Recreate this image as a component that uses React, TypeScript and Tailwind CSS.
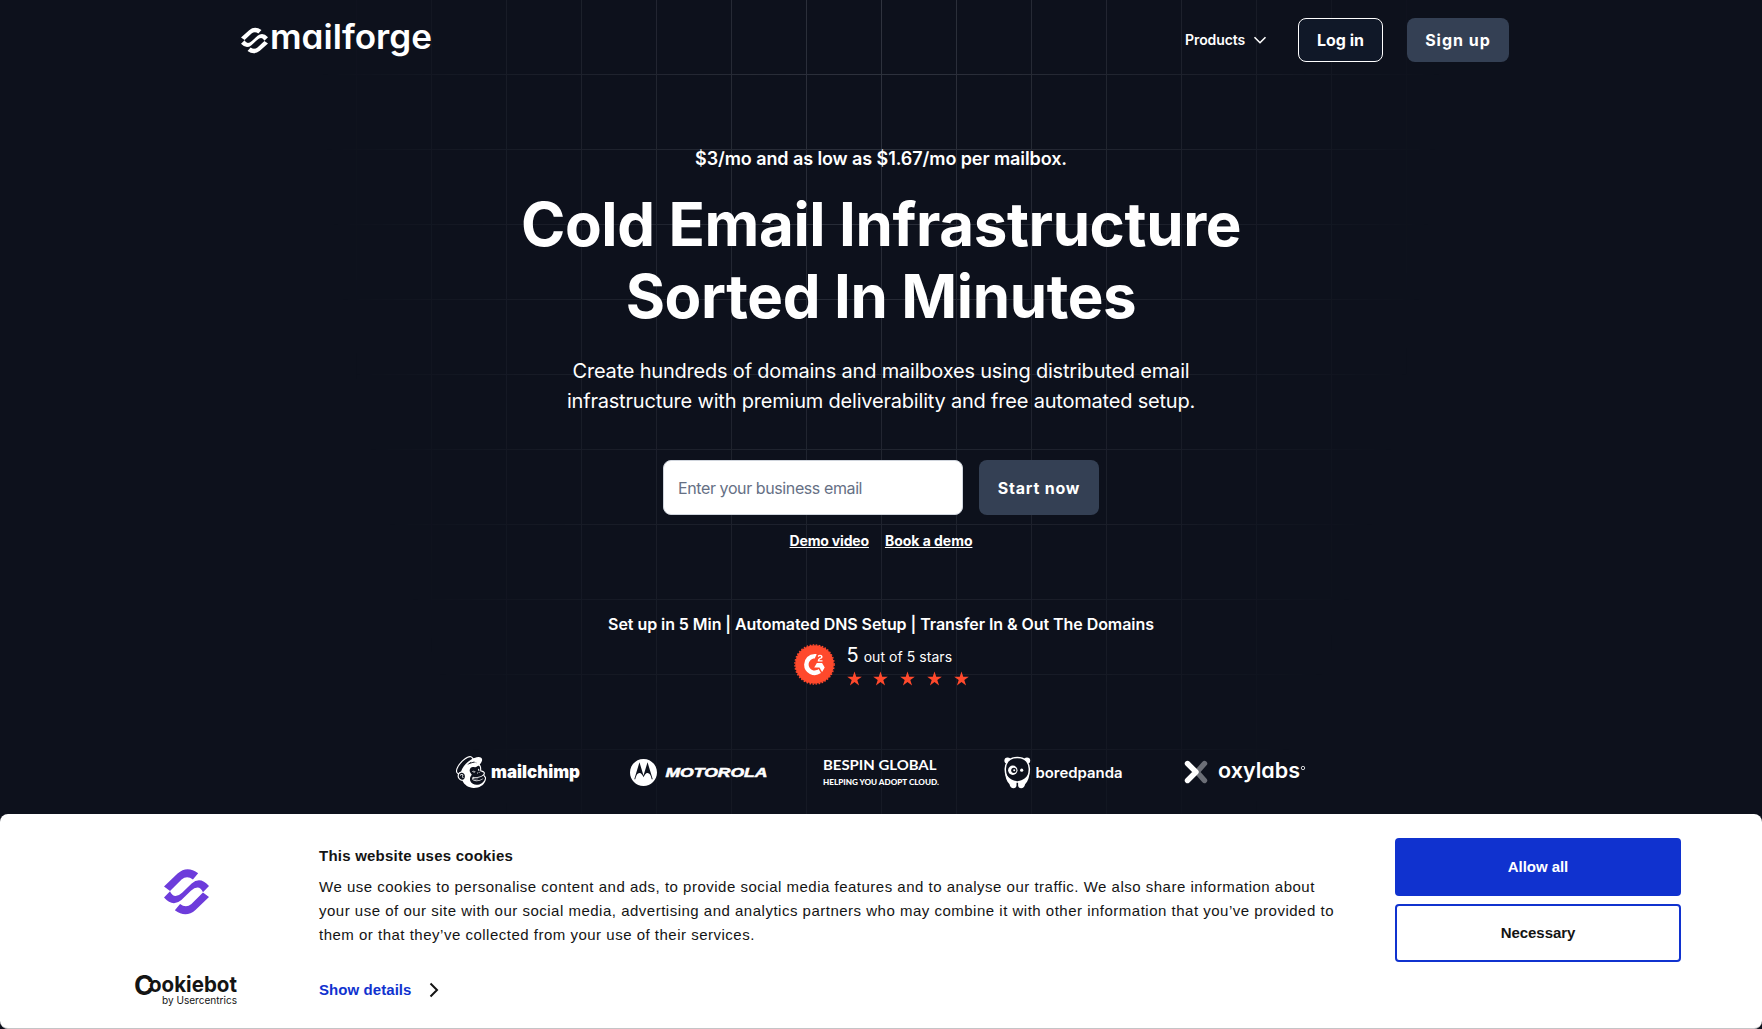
import React from "react";
import { SiG2, SiMailchimp, SiMotorola } from "react-icons/si";

function ForgeMark({ className }: { className: string }) {
  const arm = "M0 18.5 L13.5 5.5 Q23 -3 34 5.2 L28.8 11.6 Q23 7 17.5 11.5 L6 23 Z";
  return (
    <svg viewBox="0 0 44.8 47.4" preserveAspectRatio="none" fill="currentColor" className={className}>
      <path d={arm} />
      <path d="M0 29.5 L6 23.2 Q8 28 11.5 28 Q14.5 28 18 24.7 L27.5 15.5 Q36 8 44.8 18 L38.8 24.2 Q36.8 19.4 33.3 19.4 Q30.3 19.4 26.8 22.7 L17.3 31.9 Q8.8 39.4 0 29.5Z" />
      <path d={arm} transform="rotate(180 22.4 23.7)" />
    </svg>
  );
}

type WordProps = {
  x: number;
  y: number;
  size: number;
  width: number;
  children: string;
  className?: string;
  round?: boolean;
};

/** A logo word stretched to an exact width; `round` selects single-storey letters. */
function Word({ x, y, size, width, children, className, round }: WordProps) {
  return (
    <text
      x={x}
      y={y}
      fontSize={size}
      textLength={width}
      lengthAdjust="spacingAndGlyphs"
      fill="currentColor"
      className={className}
      style={round ? { fontFeatureSettings: '"cv11"' } : undefined}
    >
      {children}
    </text>
  );
}

function Header() {
  return (
    <header className="flex h-20 items-center justify-between pr-[253px] pl-[241px]">
      <div className="flex items-start">
        <ForgeMark className="mt-[7px] h-[27px] w-[27px]" />
        <svg className="h-[40px] w-[166px] overflow-visible">
          <Word x={2} y={29} size={33.5} width={162} round className="font-['Inter'] font-semibold">
            mailforge
          </Word>
        </svg>
      </div>
      <nav className="flex items-center">
        <a className="flex items-center gap-2 text-sm font-semibold tracking-[-0.11px]">
          Products
          <svg className="h-3 w-3.5" viewBox="0 0 14 12" fill="none" stroke="currentColor" strokeWidth="1.6">
            <path d="M1.5 3.2 7 8.7l5.5-5.5" />
          </svg>
        </a>
        <button className="ml-[31px] flex h-11 w-[85px] items-center justify-center rounded-lg border border-white bg-gray-900 text-base font-bold">
          Log in
        </button>
        <button className="ml-6 flex h-11 w-[102px] items-center justify-center rounded-lg bg-[#344054] text-base font-bold tracking-[1px]">
          Sign up
        </button>
      </nav>
    </header>
  );
}

function Star() {
  return (
    <svg className="h-[15px] w-[15px]" viewBox="0 0 24 24" fill="#ff492c">
      <path d="M12 .8l2.8 8.4h8.9l-7.2 5.2 2.8 8.6L12 17.7 4.7 23l2.8-8.6L.3 9.2h8.9z" />
    </svg>
  );
}

function Rating() {
  return (
    <div className="flex justify-center pl-0.5">
      <span className="relative flex h-[41px] w-[41px]">
        <svg className="h-[41px] w-[41px]" viewBox="0 0 41 41">
          <circle cx="20.5" cy="20.5" r="19.3" fill="#ff492c" />
          <circle cx="20.5" cy="20.5" r="19.6" fill="none" stroke="#ff492c" strokeWidth="1.4" strokeDasharray="1.6 1.5" />
        </svg>
        <span className="absolute top-[6px] left-[6px] h-[29px] w-[29px] rounded-full bg-white" />
        <SiG2 className="absolute top-0.5 left-0.5 h-[37px] w-[37px] text-[#ff492c]" />
      </span>
      <div className="ml-3 w-[124px]">
        <p className="-mt-[3px] flex h-[27px] items-baseline gap-[5px] leading-5">
          <span className="text-xl">5</span>
          <span className="text-sm tracking-[0.05px]">out of 5 stars</span>
        </p>
        <div className="mt-[3px] flex gap-[11.8px]">
          {[0, 1, 2, 3, 4].map((i) => (
            <Star key={i} />
          ))}
        </div>
      </div>
    </div>
  );
}

function Panda() {
  return (
    <svg className="h-[33px] w-[27px]" viewBox="0 0 27 33">
      <circle cx="3.6" cy="4.6" r="3.2" fill="#fff" />
      <circle cx="23" cy="4.6" r="3.2" fill="#fff" />
      <path
        d="M13.3 1.6C6 1.6 1.7 6 1.3 12.5 1 18 3 22.5 6.5 26h13.6c3.5-3.5 5.500-8 5.200-13.500C24.900 6 20.600 1.600 13.300 1.600z"
        fill="#0d111c"
        stroke="#fff"
        strokeWidth="1.5"
      />
      <path d="M1.300 16c2 6 7 8.500 11.200 9v4.500c0 1.500-1.300 2.800-3 2.800-2 0-3.500-1.500-4-4C2.500 25.500 1 20.500 1.300 16z" fill="#fff" />
      <path d="M25.300 16c-2 6-7 8.500-11.200 9v4.500c0 1.500 1.300 2.800 3 2.800 2 0 3.500-1.500 4-4 3-2.800 4.500-7.800 4.200-12.300z" fill="#fff" />
      <circle cx="8.8" cy="14.3" r="4.7" fill="#fff" />
      <circle cx="9.8" cy="14.3" r="2.6" fill="#0d111c" />
      <circle cx="10.2" cy="14.3" r="1" fill="#fff" />
      <circle cx="17.7" cy="14.2" r="1.6" fill="#fff" />
    </svg>
  );
}

function Customers() {
  return (
    <div className="flex h-10 items-center pl-[455px]">
      <div className="flex w-[175px] items-center">
        <SiMailchimp className="h-[34px] w-[32px]" />
        <svg className="h-10 w-[94px] overflow-visible">
          <Word x={4} y={25.5} size={18} width={89} className="font-['Inter'] font-black">
            mailchimp
          </Word>
        </svg>
      </div>
      <div className="flex w-[193px] items-center">
        <SiMotorola className="h-[27px] w-[27px]" />
        <svg className="h-10 w-[112px] overflow-visible">
          <Word x={8.5} y={24.5} size={12.5} width={102} className="stroke-white stroke-[0.5px] font-['Liberation_Sans'] font-bold italic">
            MOTOROLA
          </Word>
        </svg>
      </div>
      <svg className="h-10 w-[181px] overflow-visible">
        <Word x={0} y={17.5} size={13.8} width={113.5} className="font-['Lato'] font-bold">
          BESPIN GLOBAL
        </Word>
        <Word x={0} y={32.5} size={8.2} width={116} className="font-['Lato'] font-black">
          HELPING YOU ADOPT CLOUD.
        </Word>
      </svg>
      <div className="flex w-[180px] items-center">
        <Panda />
        <svg className="h-10 w-[94px] overflow-visible">
          <Word x={4.5} y={25.5} size={14.5} width={87} className="font-['Inter'] font-semibold">
            boredpanda
          </Word>
        </svg>
      </div>
      <div className="flex items-center">
        <svg className="h-6 w-6" viewBox="0 0 24 24" fill="none" strokeWidth="5.4" strokeLinecap="round">
          <path d="M20.5 3.5 13 12l7.500 8.500" stroke="#6b6e76" />
          <path d="M3.5 3.5 12 12l-8.500 8.500" stroke="#fff" strokeLinejoin="round" />
        </svg>
        <svg className="h-10 w-[100px] overflow-visible">
          <Word x={10} y={26} size={21.5} width={82} round className="font-['Inter'] font-semibold">
            oxylabs
          </Word>
          <circle cx="95" cy="16" r="1.7" fill="none" stroke="#fff" strokeWidth=".8" />
        </svg>
      </div>
    </div>
  );
}

function CookieBanner() {
  return (
    <section className="absolute inset-x-0 bottom-0 flex h-[215px] rounded-lg border-b border-[#c4c4c6] bg-white font-['Liberation_Sans',sans-serif] text-[15px] text-[#141414]">
      <div className="flex w-[319px] flex-col pt-[54px] pl-[135px]">
        <ForgeMark className="ml-[28.5px] h-[47.5px] w-[45px] text-[#6d3cdb]" />
        <svg className="mt-[57px] h-9 w-[104px] overflow-visible">
          <Word x={-1} y={22} size={27} width={20} className="font-['Inter'] font-bold">
            C
          </Word>
          <Word x={14} y={19} size={21.5} width={88} className="font-['Inter'] font-bold">
            ookiebot
          </Word>
          <Word x={27} y={31} size={10.5} width={75} className="font-['Inter']">
            by Usercentrics
          </Word>
        </svg>
      </div>
      <div className="flex w-[1076px] flex-col items-start">
        <h2 className="mt-[30px] font-bold leading-6 tracking-[0.23px]">This website uses cookies</h2>
        <p className="mt-[7px] leading-6 tracking-[0.5px] whitespace-nowrap">
          We use cookies to personalise content and ads, to provide social media features and to analyse our traffic. We also share information about
          <br />
          your use of our site with our social media, advertising and analytics partners who may combine it with other information that you’ve provided to
          <br />
          them or that they’ve collected from your use of their services.
        </p>
        <a className="mt-[31px] flex items-center gap-[17px] font-bold leading-6 tracking-[0.07px] text-[#1032cf]">
          Show details
          <svg className="h-4 w-[10px]" viewBox="0 0 10 16" fill="none" stroke="#141414" strokeWidth="2">
            <path d="M1.5 1.5 8 8l-6.500 6.500" />
          </svg>
        </a>
      </div>
      <div className="flex w-[286px] flex-col gap-2 pt-[24px] font-bold">
        <button className="h-[58px] rounded bg-[#1032cf] pt-px tracking-[-0.04px] text-white">Allow all</button>
        <button className="h-[58px] rounded border-2 border-[#1032cf] pt-px tracking-[-0.07px]">Necessary</button>
      </div>
    </section>
  );
}

export default function App() {
  return (
    <div className="relative isolate h-[1029px] w-[1762px] overflow-hidden bg-[#0d111c] font-['Inter',sans-serif] text-white">
      <div className="absolute inset-0 -z-10 bg-[linear-gradient(to_right,#30343f_1px,transparent_1px),linear-gradient(to_bottom,#30343f_1px,transparent_1px)] bg-[size:75px_75px] bg-[position:56px_74px] [mask-image:radial-gradient(ellipse_560px_1100px_at_881px_0px,black,transparent)]" />
      <Header />
      <main className="flex flex-col">
        <p className="mt-[65px] text-center text-lg leading-7 font-semibold tracking-[-0.09px]">$3/mo and as low as $1.67/mo per mailbox.</p>
        <h1 className="mt-[15px] text-center text-[60px] leading-[72px] font-bold tracking-[-0.37px]">
          Cold Email Infrastructure
          <br />
          Sorted In Minutes
        </h1>
        <p className="mt-6 text-center text-xl leading-[30px] tracking-[-0.2px]">
          Create hundreds of domains and mailboxes using distributed email
          <br />
          infrastructure with premium deliverability and free automated setup.
        </p>
        <div className="mt-11 flex justify-center gap-4">
          <input
            className="h-[55px] w-[300px] rounded-lg border border-[#d0d5dd] bg-white px-3.5 text-base tracking-[-0.4px] placeholder:text-[#667085]"
            placeholder="Enter your business email"
          />
          <button className="h-[55px] w-[120px] rounded-lg bg-[#344054] text-base font-bold tracking-[0.8px]">Start now</button>
        </div>
        <div className="mt-4 flex justify-center gap-4 text-sm font-bold">
          <a className="tracking-[-0.17px] underline">Demo video</a>
          <a className="tracking-[-0.03px] underline">Book a demo</a>
        </div>
        <p className="mt-[61px] mb-2 text-center text-base leading-6 font-semibold tracking-[-0.06px]">
          Set up in 5 Min | Automated DNS Setup | Transfer In &amp; Out The Domains
        </p>
        <Rating />
        <div className="mt-[66px]">
          <Customers />
        </div>
      </main>
      <CookieBanner />
    </div>
  );
}
